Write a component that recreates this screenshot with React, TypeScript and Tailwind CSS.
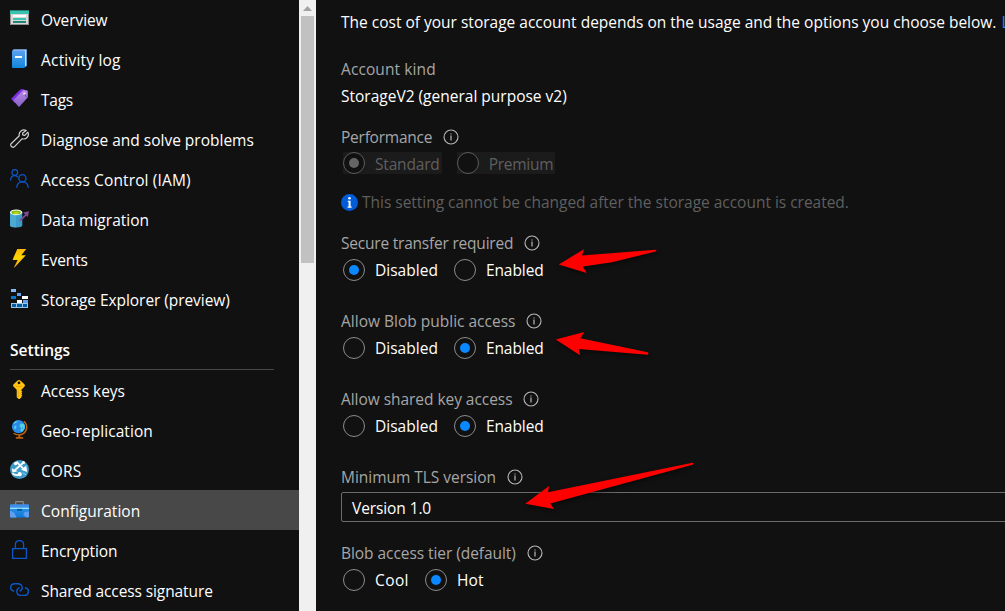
import type { ReactNode } from 'react';

const OverviewIcon = () => (
  <svg width="19" height="19" viewBox="0 0 19 19">
    <rect y="1" width="19" height="15" fill="#8f8f8f" />
    <rect x="1" y="5" width="17" height="10" fill="#d8d8d8" />
    <rect y="1" width="19" height="4" fill="#37c2b1" />
    <rect y="1" width="19" height="1" fill="#258277" />
    <rect x="3" y="6" width="13" height="2" fill="#fff" />
    <rect x="3" y="9" width="13" height="2" fill="#37c2b1" />
    <rect x="3" y="12" width="13" height="2" fill="#258277" />
  </svg>
);

const LogIcon = () => (
  <svg width="19" height="19" viewBox="0 0 19 19">
    <defs>
      <linearGradient id="log" x1="0" y1="0" x2="0" y2="1">
        <stop offset="0" stopColor="#5ea0ef" />
        <stop offset="1" stopColor="#0f86dc" />
      </linearGradient>
    </defs>
    <path d="M3 1.2Q3 .3 4 .3H16.8V16.5Q16.8 17.6 15.8 17.6H5z" fill="#83b9f9" />
    <path d="M4 1H15.8V17.2H4z" fill="#fff" opacity=".6" />
    <path d="M2 2Q2 1 3 1.2H14Q15 1.2 15 2.2V18Q15 19 14 19H3Q2 19 2 18z" fill="url(#log)" />
    <rect x="5" y="7" width="7" height="2" fill="#fff" />
  </svg>
);

const TagIcon = () => (
  <svg width="19" height="19" viewBox="0 0 19 19">
    <defs>
      <linearGradient id="tag" x1="0" y1="0" x2="0" y2="1">
        <stop offset="0" stopColor="#b98ae8" />
        <stop offset="1" stopColor="#8661c5" />
      </linearGradient>
    </defs>
    <path d="M1.5 9.3 10.3.4Q11 0 12 0l2.7.5-10 13.6L1.6 10.6Q1 10 1.5 9.3z" fill="#7b2fe0" />
    <path d="M4 10.5 12.7 1.6Q13.2 1 14 1.1l3.2.5Q17.8 1.8 17.8 2.5V8.2L9.6 17.4Q9 18 8.3 17.4L3.9 12Q3.4 11.2 4 10.5z" fill="url(#tag)" />
    <circle cx="14.4" cy="4.6" r="1.2" fill="#f4eafc" />
    <path d="M14.8 5.2 16.4 8" stroke="#5b2da0" strokeWidth=".8" />
  </svg>
);

const WrenchIcon = () => (
  <svg width="19" height="19" viewBox="0 0 19 19" fill="none" stroke="#d0d0d0" strokeWidth="1.2" strokeLinejoin="round">
    <path d="M16.2 1.6A4.7 4.7 0 0 0 9.3 6.8L1.1 14.7Q.3 15.8 1.1 17.2 2.5 19 4.3 17.8L12.2 9.7A4.7 4.7 0 0 0 17.9 3.2L14.8 6.3 12.6 5.8 12.7 4z" />
  </svg>
);

const PeopleIcon = () => (
  <svg width="19" height="19" viewBox="0 0 19 19" fill="none" stroke="#0b57c8" strokeWidth="1.3">
    <circle cx="4.8" cy="3.4" r="2.9" />
    <path d="M.6 11.6C.7 8.6 2.2 6.7 4.6 6.7Q6.6 6.7 7.9 8.2" />
    <circle cx="12.4" cy="9.2" r="3.6" />
    <path d="M6.7 18.8C6.9 15 9.2 12.8 12.4 12.8S18 15 18.3 18.8" />
  </svg>
);

const MigrationIcon = () => (
  <svg width="19" height="19" viewBox="0 0 19 19">
    <path d="M0 3.4V16.2Q0 18.4 6 18.4T12.3 16.2V3.4z" fill="#3c9bc9" />
    <path d="M0 3.4V16.2Q0 18.4 6 18.4V3.4z" fill="#59b4d9" opacity=".55" />
    <ellipse cx="6.1" cy="3.3" rx="6.1" ry="2.9" fill="#fff" />
    <ellipse cx="6.1" cy="3.4" rx="4.7" ry="1.9" fill="#7fba00" />
    <ellipse cx="6.1" cy="3.9" rx="3" ry="1.1" fill="#b8d432" />
    <path d="M10 11.6 16.7 5.2" stroke="#804998" strokeWidth="1.8" />
    <path d="M13.2 3.4 19 2.2 17.8 8z" fill="#804998" />
  </svg>
);

const BoltIcon = () => (
  <svg width="19" height="19" viewBox="0 0 19 19">
    <defs>
      <linearGradient id="bolt" x1="0" y1="0" x2="0" y2="1">
        <stop offset="0" stopColor="#feb506" />
        <stop offset=".45" stopColor="#ffd400" />
        <stop offset="1" stopColor="#f2a60d" />
      </linearGradient>
    </defs>
    <path d="M7.3 0H16.2L11.3 6.2H15.8L4.8 18.3Q3.8 19 4.3 17.8L7.6 11H3.2Q2.5 11 2.8 10.2z" fill="url(#bolt)" />
  </svg>
);

const ExplorerIcon = () => (
  <svg width="19" height="19" viewBox="0 0 19 19">
    <path d="M1 0H6V3H1z" fill="#83b9f9" />
    <path d="M7 4H11V7H7z" fill="#5ea0ef" />
    <path d="M1 7H6V10H1z" fill="#0078d4" />
    <path d="M12 7H18V10H12z" fill="#fff" />
    <path d="M7 11H12V14H7z" fill="#fff" />
    <path d="M13 11H18V14H13z" fill="#5ea0ef" />
    <path d="M1 14H18V19H1z" fill="#9cc4e8" />
    <path d="M2 15H6V18H2zM7 15H12V18H7zM13 15H17V18H13z" fill="#005ba1" />
  </svg>
);

const KeyIcon = () => (
  <svg width="19" height="19" viewBox="0 0 19 19">
    <path
      fillRule="evenodd"
      d="M7.6.5Q9 -.4 10.4.5L14.4 4.2Q15.4 5.4 14.5 6.6L11.4 9.8V10.8L12.4 11.8 11.4 12.7 12.3 13.7 11.4 14.6 12.3 15.6 11.4 16.5V17.4L9.6 19H8.6L6.7 17.2V9.8L3.5 6.6Q2.6 5.4 3.6 4.2zM9 1.4a1.4 1.4 0 1 0 0 2.8 1.4 1.4 0 1 0 0-2.8z"
      fill="#ffc20e"
    />
    <path d="M5.7 6H12.3V6.8H5.7zM7.8 10.5H8.5V17H7.8z" fill="#e59a0a" />
  </svg>
);

const GlobeIcon = () => (
  <svg width="19" height="19" viewBox="0 0 19 19">
    <path d="M13.8 1.2C17.6 4 17.6 10.2 14 13.1 10.5 15.8 6 15.2 3.6 13.3" fill="none" stroke="#c0650c" strokeWidth="1.4" />
    <path d="M9.3 15V17" stroke="#c0650c" strokeWidth="1.8" />
    <rect x="5.8" y="16.9" width="7.4" height="1.8" rx=".5" fill="#b85f10" />
    <circle cx="8.5" cy="6.7" r="6.6" fill="#2a8be8" />
    <path d="M8 .4Q4.6 1.1 3.2 3.4L5 3.6 6.6 2.2zM4.8 5.6 6.6 6 6.2 8 4.9 9.4 4 8zM10.6 3.6 14 3.9Q15.6 6.4 14.7 8.8L12 12 10.3 10.4 11.1 8 9.4 6.3z" fill="#50d3dd" />
    <path d="M12 7 13 9" stroke="#2a8be8" strokeWidth=".8" />
  </svg>
);

const CorsIcon = () => (
  <svg width="19" height="19" viewBox="0 0 19 19">
    <circle cx="9.5" cy="9.5" r="9.5" fill="#3c9bc9" />
    <path d="M6.4 1.6 14 9.4M13 3 5 10" stroke="#fff" strokeWidth="1.7" />
    <circle cx="5.6" cy="3.6" r="1.7" fill="#fff" />
    <circle cx="13.5" cy="2.6" r="1.5" fill="#fff" />
    <path d="M2 8.2 7.7 11.2 2.4 12.4zM16.2 5.4 17.2 12 11.1 9.8z" fill="#fff" />
    <path d="M2.4 13.4Q5.2 16 9.8 14.6" fill="none" stroke="#fff" strokeWidth="1.8" />
    <circle cx="9.7" cy="14.2" r="2.1" fill="#fff" />
    <path d="M12.5 12.8 16 14.8" stroke="#8ccbe6" strokeWidth="1" />
  </svg>
);

const ToolboxIcon = () => (
  <svg width="19" height="19" viewBox="0 0 19 19">
    <defs>
      <linearGradient id="box" x1="0" y1="0" x2="0" y2="1">
        <stop offset="0" stopColor="#2f8fe6" />
        <stop offset="1" stopColor="#0f78d8" />
      </linearGradient>
    </defs>
    <path d="M5.7 5V2.2Q5.7 1.6 6.3 1.6H12.7Q13.3 1.6 13.3 2.2V5" fill="none" stroke="#8a8a8a" strokeWidth="1.2" />
    <path d="M0 8H19V16.5Q19 17.6 18 17.6H1Q0 17.6 0 16.5z" fill="url(#box)" />
    <path d="M1 4.3H18Q19 4.3 19 5.3V8H0V5.3Q0 4.3 1 4.3z" fill="#3f8fea" />
    <rect y="7.7" width="19" height="1.2" fill="#9cebff" />
    <rect x="7" y="8.9" width="5" height="2" fill="#005ba1" />
    <path d="M0 10.5 4.4 13 6.5 17.6H1Q0 17.6 0 16.5zM19 11.5 14.8 12 13.2 14.4 15.8 17.2H18Q19 17.2 19 16.5z" fill="#5ea0ef" />
  </svg>
);

const LockIcon = () => (
  <svg width="19" height="19" viewBox="0 0 19 19" fill="none" stroke="#0b57c8" strokeWidth="1.3">
    <rect x="2.6" y="8.6" width="13.8" height="9.8" />
    <path d="M5.4 8.5V4.5C5.4-.7 13.6-.7 13.6 4.5V8.5" />
  </svg>
);

const LinkIcon = () => (
  <svg width="19" height="19" viewBox="0 0 19 19" fill="none" stroke="#0b57c8" strokeWidth="1.4">
    <path d="M4.2 11.2C-.9 10.2-.2 3.7 4.8 3.7H8C12.8 3.7 13.6 10 9.6 11" />
    <path d="M9.4 7.6C5.6 9.2 6 15.4 11 15.4H14.2C19.6 15.4 19.8 8.5 14.8 7.8" />
  </svg>
);

const topItems: [string, () => ReactNode, string][] = [
  ['Overview', OverviewIcon, 'tracking-[-0.09px]'],
  ['Activity log', LogIcon, 'tracking-[0.2px]'],
  ['Tags', TagIcon, 'tracking-[-0.25px]'],
  ['Diagnose and solve problems', WrenchIcon, 'tracking-[0px]'],
  ['Access Control (IAM)', PeopleIcon, 'tracking-[0.13px]'],
  ['Data migration', MigrationIcon, 'tracking-[0.01px]'],
  ['Events', BoltIcon, 'tracking-[-0.1px]'],
  ['Storage Explorer (preview)', ExplorerIcon, 'tracking-[-0.06px]'],
];

const settingsItems: [string, () => ReactNode, string][] = [
  ['Access keys', KeyIcon, 'tracking-[-0.02px]'],
  ['Geo-replication', GlobeIcon, 'tracking-[0.06px]'],
  ['CORS', CorsIcon, 'tracking-[0.1px]'],
  ['Configuration', ToolboxIcon, 'tracking-[0.03px]'],
  ['Encryption', LockIcon, 'tracking-[-0.1px]'],
  ['Shared access signature', LinkIcon, 'tracking-[-0.1px]'],
];

function NavItem({ label, Icon, tracking }: { label: string; Icon: () => ReactNode; tracking: string }) {
  return (
    <li className={`flex h-10 shrink-0 items-center pl-2.5 ${label === 'Configuration' ? 'bg-[#484848]' : ''}`}>
      <span className="mb-px shrink-0">
        <Icon />
      </span>
      <span className={`ml-3 pt-0.5 leading-6 ${tracking}`}>{label}</span>
    </li>
  );
}

const InfoIcon = () => (
  <svg width="16" height="16" viewBox="0 0 16 16" className="shrink-0">
    <circle cx="8" cy="8" r="7" fill="none" stroke="#b8b8b8" strokeWidth="1.1" />
    <path d="M8 6.6V11.5M8 4.4V5.6" stroke="#c8c8c8" strokeWidth="1.1" />
  </svg>
);

function Label({ children, tracking }: { children: string; tracking: string }) {
  return (
    <div className="flex h-6 items-center gap-[11px] text-[#a6a6a6]">
      <span className={`leading-6 ${tracking}`}>{children}</span>
      <InfoIcon />
    </div>
  );
}

function Radio({ label, on, muted, tracking }: { label: string; on?: boolean; muted?: boolean; tracking: string }) {
  return (
    <div className={`flex items-center ${muted ? 'h-[22px] bg-[#1b1b1b] pr-0.5 text-[#5f5f5f]' : 'h-[23px]'}`}>
      <span
        className={`flex size-[22px] shrink-0 items-center justify-center rounded-full border bg-[#111] ${
          muted ? 'border-[#5c5c5c]' : 'border-[#8c8c8c]'
        }`}
      >
        {on && <span className={`size-2.5 rounded-full ${muted ? 'bg-[#656565]' : 'bg-[#0a88ff]'}`} />}
      </span>
      <span className={`ml-2.5 pt-0.5 leading-[23px] ${tracking}`}>{label}</span>
    </div>
  );
}

function Toggle({ value }: { value: 'Disabled' | 'Enabled' }) {
  return (
    <div className="mt-[3px] ml-0.5 flex h-6 gap-4">
      <Radio label="Disabled" on={value === 'Disabled'} tracking="tracking-[0.02px]" />
      <Radio label="Enabled" on={value === 'Enabled'} tracking="tracking-[-0.08px]" />
    </div>
  );
}

export default function App() {
  return (
    <div className="relative flex h-[611px] w-[1005px] overflow-hidden bg-[#111] font-['Open_Sans',sans-serif] text-[15.5px] whitespace-nowrap text-white">
      <nav className="w-[299px] shrink-0 overflow-hidden">
        <ul className="-mt-px flex flex-col">
          {topItems.map(([label, Icon, tracking]) => (
            <NavItem key={label} label={label} Icon={Icon} tracking={tracking} />
          ))}
        </ul>
        <div className="mr-[25px] ml-2.5 flex h-[51px] items-center border-b border-[#484848] pt-3">
          <span className="leading-6 font-semibold tracking-[0.02px]">Settings</span>
        </div>
        <ul className="flex flex-col">
          {settingsItems.map(([label, Icon, tracking]) => (
            <NavItem key={label} label={label} Icon={Icon} tracking={tracking} />
          ))}
        </ul>
      </nav>

      <div className="flex w-[17px] shrink-0 flex-col items-center bg-[#f0f0f0]">
        <div className="flex h-4 items-center">
          <svg width="9" height="5" viewBox="0 0 9 5">
            <path d="M4.5 0 9 5H0z" fill="#a3a3a3" />
          </svg>
        </div>
        <div className="h-[247px] w-[13px] bg-[#c1c1c1]" />
      </div>

      <main className="min-w-0 flex-1 overflow-hidden pt-[10px] pl-[25px]">
        <p className="h-6 leading-6">
          The cost of your storage account depends on the usage and the options you choose below.{' '}
          <a className="ml-px text-[#2f80ff]">L</a>
        </p>
        <p className="mt-[23px] h-6 leading-6 tracking-[0.1px] text-[#a6a6a6]">Account kind</p>
        <p className="mt-[3px] h-6 leading-6">StorageV2 (general purpose v2)</p>

        <div className="mt-[17px]">
          <Label tracking="tracking-[-0.24px]">Performance</Label>
        </div>
        <div className="mt-[3px] ml-0.5 flex gap-[15px]">
          <Radio label="Standard" on muted tracking="tracking-[-0.18px]" />
          <Radio label="Premium" muted tracking="tracking-[-0.25px]" />
        </div>
        <div className="mt-4 flex h-6 items-center gap-1 text-[#5f5f5f]">
          <svg width="17" height="17" viewBox="0 0 17 17" className="shrink-0">
            <circle cx="8.5" cy="8.5" r="8.5" fill="#015cda" />
            <circle cx="8.5" cy="4.3" r="1.3" fill="#fff" />
            <path d="M6.8 6.7H9.6V12.6H10.6V13.8H6.6V12.6H7.6V7.9H6.8z" fill="#fff" />
          </svg>
          <span className="leading-6 tracking-[-0.02px]">
            This setting cannot be changed after the storage account is created.
          </span>
        </div>

        <div className="mt-[17px]">
          <Label tracking="tracking-[-0.21px]">Secure transfer required</Label>
          <Toggle value="Disabled" />
        </div>
        <div className="mt-[27px]">
          <Label tracking="tracking-[0px]">Allow Blob public access</Label>
          <Toggle value="Enabled" />
        </div>
        <div className="mt-[27px]">
          <Label tracking="tracking-[-0.05px]">Allow shared key access</Label>
          <Toggle value="Enabled" />
        </div>

        <div className="mt-[27px]">
          <Label tracking="tracking-[-0.03px]">Minimum TLS version</Label>
          <div className="mt-[3px] flex h-[30px] w-[700px] items-center rounded-[2px] border border-[#6a6a6a] pt-0.5 pl-2.5">
            <span className="leading-6 tracking-[-0.1px]">Version 1.0</span>
          </div>
        </div>

        <div className="mt-[19px]">
          <Label tracking="tracking-[-0.06px]">Blob access tier (default)</Label>
          <div className="mt-[3px] ml-0.5 flex gap-4">
            <Radio label="Cool" tracking="tracking-[0.4px]" />
            <Radio label="Hot" on tracking="tracking-[0.1px]" />
          </div>
        </div>
      </main>

      <svg
        width="1005"
        height="611"
        viewBox="0 0 1005 611"
        className="pointer-events-none absolute inset-0 drop-shadow-[1px_2px_2px_rgba(0,0,0,0.5)]"
        fill="#fe0000"
      >
        <path d="M558.7 264.4 584 249.3 582 255.4 655.5 249.8Q657.5 250.6 655.5 251.6L612 262.2 582.7 266.6 586.7 273z" />
        <path d="M555.7 339.4 584.3 332 580.3 338.3 647.8 352.2Q649.4 353.6 647.8 354.8L578.7 349 580 355.3z" />
        <path d="M525.3 503.7 549 486 548 492.2 692.5 462.8Q694.3 463.6 692.5 464.8L550.3 503.4 554 509z" />
      </svg>
    </div>
  );
}
